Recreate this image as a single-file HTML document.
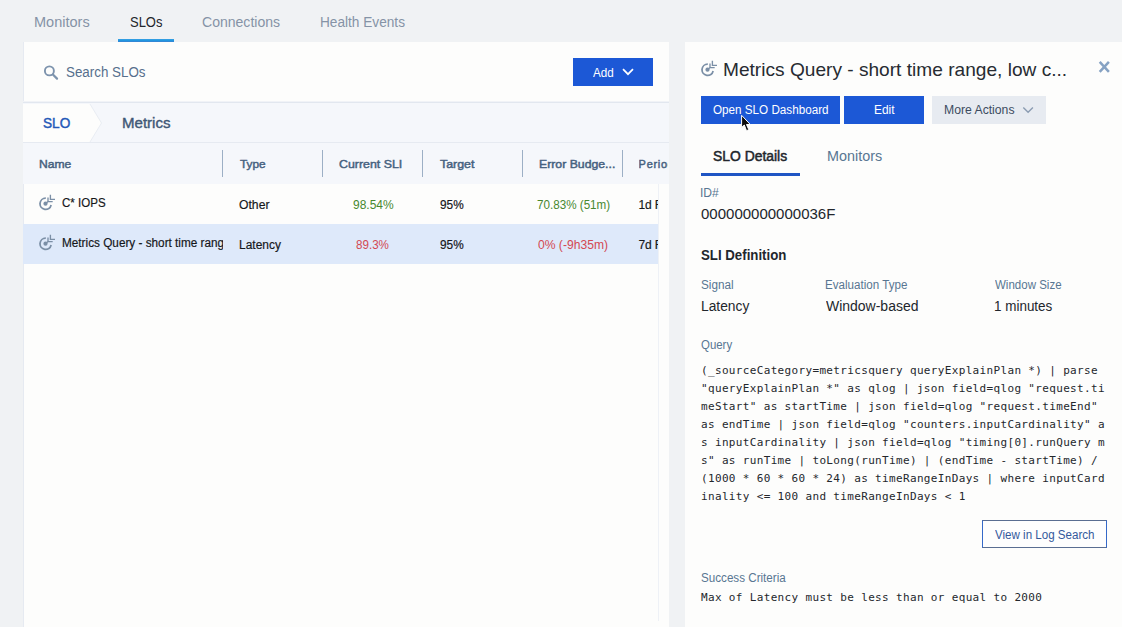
<!DOCTYPE html>
<html lang="en"><head><meta charset="utf-8"><title>SLOs</title>
<style>
*{margin:0;padding:0;box-sizing:border-box}
html,body{width:1122px;height:627px;overflow:hidden}
body{position:relative;background:#f0f2f4;font-family:"Liberation Sans",Arial,sans-serif;color:#22262c}
.abs,.t,.ico{position:absolute}
.t{white-space:pre;line-height:1;transform-origin:0 50%}
#left{left:23px;top:42px;width:646px;height:585px;background:#fdfdfc;border-left:1px solid #e6eaf1;overflow:hidden}
#right{left:685px;top:42px;width:437px;height:585px;background:#fdfdfc}
#tabline{left:118px;top:39px;width:56px;height:3px;background:linear-gradient(#3ba2e3,#2196e0 50%,#3a80d0)}
#searchline{left:23px;top:101px;width:646px;height:2px;background:linear-gradient(#f1f3f7,#f1f3f7 50%,#e2e7ef 50%)}
#crumb{left:23px;top:103px;width:646px;height:39px;background:#f5f7fb}
#crumbline{left:23px;top:142px;width:646px;height:1px;background:#e6eaf1}
#thead{left:23px;top:143px;width:646px;height:41px;background:#f5f7fb}
#row2{left:23px;top:224px;width:635.4px;height:39.5px;background:#dee9fa}
#vline{left:658px;top:184px;width:1px;height:437px;background:#eef1f6}
.sep{position:absolute;top:150px;width:1px;height:27px;background:#9cafc5}
.btn{position:absolute;height:28px;background:#1c58d6}
#ptab{left:701px;top:173px;width:99px;height:3px;background:#1f55c4}
#more{left:932px;top:96px;width:114px;height:28px;background:#e7ebf1}
#vls{left:982px;top:520px;width:125px;height:28px;border:1.2px solid;border-color:#5a6e92 #3569c9;background:#fefefe}
#q{left:701px;top:362.00px;font:11px/18px "DejaVu Sans Mono","Liberation Mono",monospace;color:#24272c;white-space:pre;letter-spacing:0.342px}
#sc{left:701px;top:589.00px;font:11px/18px "DejaVu Sans Mono","Liberation Mono",monospace;color:#24272c;white-space:pre;letter-spacing:0.342px}
#namecell{left:61.7px;top:224px;width:161.1px;height:40px;overflow:hidden}
#r2a{left:0;top:13.04px;font-size:12px;color:#15171a;transform:scaleX(0.9805);-webkit-text-stroke:.18px #15171a}
.pc{position:absolute;left:638.4px;width:20.1px;height:40px;overflow:hidden}
.pc .t{left:0;top:14.74px;font-size:12px;letter-spacing:-.1px;color:#15171a;-webkit-text-stroke:.18px #15171a}
#hc{left:638.6px;top:143px;width:29.6px;height:41px;overflow:hidden}
#h6{left:0 !important;top:16.19px !important}

#t1{left:33.96px;top:15.35px;font-size:14px;font-weight:400;color:#8593a6;transform:scaleX(1.0373);}
#t2{left:129.62px;top:15.20px;font-size:14.3px;font-weight:400;color:#23262b;transform:scaleX(0.9072);}
#t3{left:201.95px;top:15.35px;font-size:14px;font-weight:400;color:#8593a6;transform:scaleX(1.0026);}
#t4{left:320.23px;top:15.35px;font-size:14px;font-weight:400;color:#8593a6;transform:scaleX(0.9749);}
#s1{left:65.88px;top:64.75px;font-size:14px;font-weight:400;color:#566f8c;transform:scaleX(0.9549);}
#b1{left:593.00px;top:66.54px;font-size:12px;font-weight:400;color:#ffffff;transform:scaleX(0.9735);}
#c1{left:43.07px;top:115.85px;font-size:14px;font-weight:400;color:#2458b8;transform:scaleX(0.9736);-webkit-text-stroke:.42px #2458b8;}
#c2{left:121.73px;top:115.85px;font-size:14px;font-weight:400;color:#3f5876;transform:scaleX(1.0743);-webkit-text-stroke:.38px #3f5876;}
#h1{left:39.07px;top:159.19px;font-size:11px;font-weight:400;color:#46617f;transform:scaleX(1.1009);-webkit-text-stroke:.45px #46617f;}
#h2{left:239.93px;top:159.19px;font-size:11px;font-weight:400;color:#46617f;transform:scaleX(1.0753);-webkit-text-stroke:.45px #46617f;}
#h3{left:339.44px;top:159.19px;font-size:11px;font-weight:400;color:#46617f;transform:scaleX(1.1233);-webkit-text-stroke:.45px #46617f;}
#h4{left:439.72px;top:159.19px;font-size:11px;font-weight:400;color:#46617f;transform:scaleX(1.1273);-webkit-text-stroke:.45px #46617f;}
#h5{left:539.16px;top:159.19px;font-size:11px;font-weight:400;color:#46617f;transform:scaleX(1.1146);-webkit-text-stroke:.45px #46617f;}
#h6{left:638.85px;top:159.19px;font-size:11px;font-weight:400;color:#46617f;letter-spacing:0.700px;-webkit-text-stroke:.45px #46617f;}
#r1a{left:62.22px;top:197.34px;font-size:12px;font-weight:400;color:#15171a;transform:scaleX(0.9627);-webkit-text-stroke:.18px #15171a;}
#r1b{left:239.09px;top:198.74px;font-size:12px;font-weight:400;color:#15171a;transform:scaleX(1.0154);-webkit-text-stroke:.18px #15171a;}
#r1c{left:352.60px;top:198.74px;font-size:12px;font-weight:400;color:#47882f;transform:scaleX(0.9987);}
#r1d{left:439.51px;top:198.74px;font-size:12px;font-weight:400;color:#15171a;transform:scaleX(0.9849);-webkit-text-stroke:.18px #15171a;}
#r1e{left:536.91px;top:198.74px;font-size:12px;font-weight:400;color:#47882f;transform:scaleX(0.9710);}
#r2b{left:238.60px;top:238.74px;font-size:12px;font-weight:400;color:#15171a;transform:scaleX(0.9976);-webkit-text-stroke:.18px #15171a;}
#r2c{left:356.22px;top:238.74px;font-size:12px;font-weight:400;color:#d34852;transform:scaleX(0.9684);}
#r2d{left:439.51px;top:238.74px;font-size:12px;font-weight:400;color:#15171a;transform:scaleX(0.9849);-webkit-text-stroke:.18px #15171a;}
#r2e{left:538.40px;top:238.74px;font-size:12px;font-weight:400;color:#d34852;transform:scaleX(1.0095);}
#p1{left:722.79px;top:59.72px;font-size:19px;font-weight:400;color:#272b31;transform:scaleX(1.0059);}
#p2{left:713.11px;top:104.44px;font-size:12px;font-weight:400;color:#ffffff;transform:scaleX(0.9728);}
#p3{left:873.61px;top:104.44px;font-size:12px;font-weight:400;color:#ffffff;transform:scaleX(0.9924);}
#p4{left:943.98px;top:104.44px;font-size:12px;font-weight:400;color:#3c4b5f;transform:scaleX(1.0162);}
#p5{left:713.06px;top:149.25px;font-size:14px;font-weight:400;color:#22262c;transform:scaleX(0.9918);-webkit-text-stroke:.5px #22262c;}
#p6{left:827.07px;top:149.25px;font-size:14px;font-weight:400;color:#587692;transform:scaleX(1.0278);}
#p7{left:700.49px;top:186.84px;font-size:12px;font-weight:400;color:#587692;transform:scaleX(1.0085);}
#p8{left:700.96px;top:207.15px;font-size:14px;font-weight:400;color:#22262c;transform:scaleX(1.0720);}
#p9{left:701.23px;top:248.05px;font-size:14px;font-weight:700;color:#22262c;transform:scaleX(0.9461);}
#p10{left:701.21px;top:278.64px;font-size:12px;font-weight:400;color:#587692;transform:scaleX(0.9781);}
#p11{left:825.23px;top:278.64px;font-size:12px;font-weight:400;color:#587692;transform:scaleX(0.9672);}
#p12{left:994.60px;top:278.64px;font-size:12px;font-weight:400;color:#587692;transform:scaleX(0.9594);}
#p13{left:700.71px;top:299.05px;font-size:14px;font-weight:400;color:#22262c;transform:scaleX(0.9854);}
#p14{left:826.20px;top:299.05px;font-size:14px;font-weight:400;color:#22262c;transform:scaleX(0.9984);}
#p15{left:993.64px;top:299.05px;font-size:14px;font-weight:400;color:#22262c;transform:scaleX(0.9603);}
#p16{left:701.22px;top:339.44px;font-size:12px;font-weight:400;color:#587692;transform:scaleX(0.9519);}
#p17{left:995.00px;top:528.64px;font-size:12px;font-weight:400;color:#34599c;transform:scaleX(0.9649);}
#p18{left:701.21px;top:571.54px;font-size:12px;font-weight:400;color:#587692;transform:scaleX(0.9701);}
</style></head>
<body>
<div class="abs" id="left"></div>
<div class="abs" id="right"></div>
<div class="abs" id="tabline"></div>
<div class="abs" id="searchline"></div>
<div class="abs" id="crumb"></div>
<svg class="abs" style="left:23px;top:103px" width="90" height="39" viewBox="0 0 90 39"><path d="M0 1H67L78.5 20L67 39H0Z" fill="#fdfdfc"/><path d="M67 1L78.5 20L67 39" fill="none" stroke="#e9edf3" stroke-width="1"/></svg>
<div class="abs" id="crumbline"></div>
<div class="abs" id="thead"></div>
<div class="sep" style="left:222px"></div><div class="sep" style="left:322px"></div><div class="sep" style="left:422px"></div><div class="sep" style="left:522px"></div><div class="sep" style="left:622px"></div>
<div class="abs" id="row2"></div>
<div class="abs" id="vline"></div>
<!-- search icon -->
<svg class="abs" style="left:43px;top:64px" width="16" height="16" viewBox="0 0 16 16"><circle cx="6.4" cy="6.9" r="4.5" fill="none" stroke="#7d93ad" stroke-width="1.9"/><path d="M9.9 10.5L14 14.6" stroke="#7d93ad" stroke-width="2.2" stroke-linecap="round"/></svg>
<!-- Add button -->
<div class="btn" style="left:573px;top:58px;width:80px"></div>
<svg class="abs" style="left:621px;top:67px" width="14" height="10" viewBox="0 0 14 10"><path d="M2 2.2L7 7.2L12 2.2" fill="none" stroke="#fff" stroke-width="1.7"/></svg>
<svg class="ico" style="left:38.6px;top:194.1px" width="17" height="17" viewBox="0 0 17 17"><path d="M6.8 4.2A5.6 5.6 0 1 0 12.1 11" fill="none" stroke="#7b8fa6" stroke-width="1.8"/><circle cx="6.5" cy="9.7" r="2.1" fill="#7b8fa6"/><path d="M6.5 9.7L9 7.6M9 3.4V7.6H13.7M11.4 0.8V5.3H16" fill="none" stroke="#7b8fa6" stroke-width="1.35"/></svg>
<svg class="ico" style="left:38.6px;top:234.1px" width="17" height="17" viewBox="0 0 17 17"><path d="M6.8 4.2A5.6 5.6 0 1 0 12.1 11" fill="none" stroke="#7b8fa6" stroke-width="1.8"/><circle cx="6.5" cy="9.7" r="2.1" fill="#7b8fa6"/><path d="M6.5 9.7L9 7.6M9 3.4V7.6H13.7M11.4 0.8V5.3H16" fill="none" stroke="#7b8fa6" stroke-width="1.35"/></svg>
<svg class="ico" style="left:701px;top:60px" width="17" height="17" viewBox="0 0 17 17"><path d="M6.8 4.2A5.6 5.6 0 1 0 12.1 11" fill="none" stroke="#7b8fa6" stroke-width="1.8"/><circle cx="6.5" cy="9.7" r="2.1" fill="#7b8fa6"/><path d="M6.5 9.7L9 7.6M9 3.4V7.6H13.7M11.4 0.8V5.3H16" fill="none" stroke="#7b8fa6" stroke-width="1.35"/></svg>
<div class="pc" style="top:184px"><div class="t">1d Rolling</div></div>
<div class="pc" style="top:224px"><div class="t">7d Rolling</div></div>
<div class="abs" id="hc"><div class="t" id="h6">Period</div></div>
<div class="abs" id="namecell"><div class="t" id="r2a">Metrics Query - short time range, low cardinality</div></div>
<!-- right panel -->
<div class="btn" style="left:701px;top:96px;width:139px"></div>
<div class="btn" style="left:844px;top:96px;width:80px"></div>
<div class="abs" id="more"></div>
<svg class="abs" style="left:1021px;top:105px" width="14" height="10" viewBox="0 0 14 10"><path d="M2.3 2.4L7.1 7.3L11.9 2.4" fill="none" stroke="#8b9cb2" stroke-width="1.4"/></svg>
<svg class="abs" style="left:1098px;top:60px" width="14" height="14" viewBox="0 0 14 14"><path d="M1.7 1.9L10.9 11.8M10.9 1.9L1.7 11.8" stroke="#86a2c3" stroke-width="2.5" fill="none"/></svg>
<div class="abs" id="ptab"></div>
<div class="abs" id="vls"></div>
<div class="t" id="t1">Monitors</div>
<div class="t" id="t2">SLOs</div>
<div class="t" id="t3">Connections</div>
<div class="t" id="t4">Health Events</div>
<div class="t" id="s1">Search SLOs</div>
<div class="t" id="b1">Add</div>
<div class="t" id="c1">SLO</div>
<div class="t" id="c2">Metrics</div>
<div class="t" id="h1">Name</div>
<div class="t" id="h2">Type</div>
<div class="t" id="h3">Current SLI</div>
<div class="t" id="h4">Target</div>
<div class="t" id="h5">Error Budge...</div>
<div class="t" id="r1a">C* IOPS</div>
<div class="t" id="r1b">Other</div>
<div class="t" id="r1c">98.54%</div>
<div class="t" id="r1d">95%</div>
<div class="t" id="r1e">70.83% (51m)</div>
<div class="t" id="r2b">Latency</div>
<div class="t" id="r2c">89.3%</div>
<div class="t" id="r2d">95%</div>
<div class="t" id="r2e">0% (-9h35m)</div>
<div class="t" id="p1">Metrics Query - short time range, low c...</div>
<div class="t" id="p2">Open SLO Dashboard</div>
<div class="t" id="p3">Edit</div>
<div class="t" id="p4">More Actions</div>
<div class="t" id="p5">SLO Details</div>
<div class="t" id="p6">Monitors</div>
<div class="t" id="p7">ID#</div>
<div class="t" id="p8">000000000000036F</div>
<div class="t" id="p9">SLI Definition</div>
<div class="t" id="p10">Signal</div>
<div class="t" id="p11">Evaluation Type</div>
<div class="t" id="p12">Window Size</div>
<div class="t" id="p13">Latency</div>
<div class="t" id="p14">Window-based</div>
<div class="t" id="p15">1 minutes</div>
<div class="t" id="p16">Query</div>
<div class="t" id="p17">View in Log Search</div>
<div class="t" id="p18">Success Criteria</div>
<div class="abs" id="q"><div class="ql">(_sourceCategory=metricsquery queryExplainPlan *) | parse</div><div class="ql">&quot;queryExplainPlan *&quot; as qlog | json field=qlog &quot;request.ti</div><div class="ql">meStart&quot; as startTime | json field=qlog &quot;request.timeEnd&quot;</div><div class="ql">as endTime | json field=qlog &quot;counters.inputCardinality&quot; a</div><div class="ql">s inputCardinality | json field=qlog &quot;timing[0].runQuery m</div><div class="ql">s&quot; as runTime | toLong(runTime) | (endTime - startTime) /</div><div class="ql">(1000 * 60 * 60 * 24) as timeRangeInDays | where inputCard</div><div class="ql">inality &lt;= 100 and timeRangeInDays &lt; 1</div></div>
<div class="abs" id="sc">Max of Latency must be less than or equal to 2000</div>
<!-- mouse cursor -->
<svg class="abs" style="left:739px;top:114px" width="14" height="20" viewBox="0 0 14 20"><path d="M2.6 1.3V13.5L5.3 11L7.5 16.7L9.8 15.7L7.5 10.5H11.3Z" fill="#0b0b0b" stroke="#fff" stroke-width="1" stroke-linejoin="round"/></svg>
</body></html>
